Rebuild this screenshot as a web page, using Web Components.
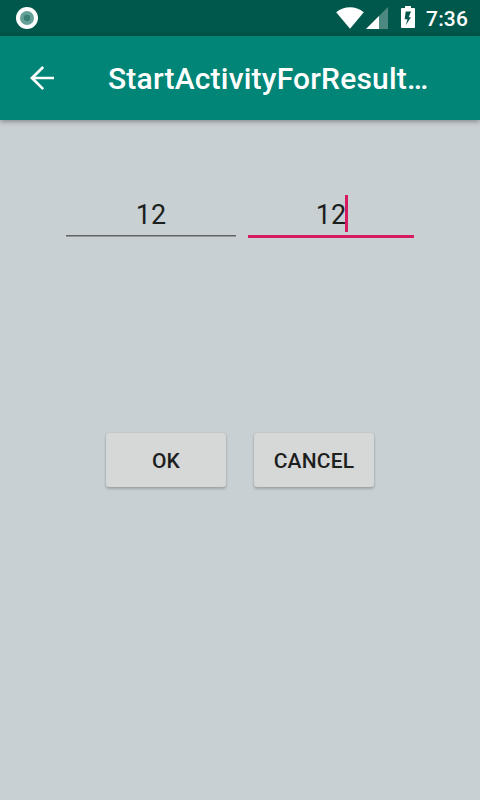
<!DOCTYPE html>
<html lang="en">
<head>
<meta charset="utf-8">
<title>StartActivityForResult</title>
<style>
html, body { margin: 0; height: 100%; }
body { font-family: Roboto, "Noto Sans", sans-serif; overflow: hidden; }
</style>
</head>
<body>
<phone-screen>
  <status-bar slot="status">7:36</status-bar>
  <app-bar slot="bar">StartActivityForResult…</app-bar>
  <number-field slot="fields" style="width:170px">12</number-field>
  <number-field slot="fields" style="width:166px" focused>12</number-field>
  <raised-button slot="actions">OK</raised-button>
  <raised-button slot="actions">CANCEL</raised-button>
</phone-screen>
<script>
function define(name, html) {
  const template = document.createElement('template');
  template.innerHTML = html;
  customElements.define(name, class extends HTMLElement {
    constructor() {
      super();
      this.attachShadow({ mode: 'open' }).append(template.content.cloneNode(true));
    }
  });
}

define('phone-screen', `
<style>
:host { display: flex; flex-direction: column; width: 480px; height: 800px; background: #c8d0d4; color: #1d1e1e; }
.fields { display: flex; justify-content: center; gap: 12px; padding-top: 67px; height: 51px; }
.actions { display: flex; justify-content: center; gap: 28px; padding-top: 195px; }
</style>
<slot name="status"></slot>
<slot name="bar"></slot>
<div class="fields"><slot name="fields"></slot></div>
<div class="actions"><slot name="actions"></slot></div>`);

define('status-bar', `
<style>
:host { display: flex; align-items: center; box-sizing: border-box; height: 36px; padding: 0 12px 0 16px; background: #00574b; color: #fff; font-size: 21px; font-weight: 500; line-height: 36px; }
svg { display: block; flex: none; }
.space { flex: 1; }
.time { width: 42px; height: 36px; margin-left: 2px; line-height: 38px; letter-spacing: .2px; white-space: nowrap; }
</style>
<svg width="22" height="22" viewBox="0 0 22 22"><circle cx="11" cy="11" r="11" fill="#fff"/><circle cx="11" cy="11" r="7" fill="#66a198"/><circle cx="11" cy="11" r="3.2" fill="#3b8075"/></svg>
<span class="space"></span>
<svg width="88" height="36" viewBox="336 0 88 36" fill="#fff">
  <path d="M336.2 12.2C344.3 5.7 355.7 5.7 363.8 12.2L350 28.7Z"/>
  <path d="M388 7V29H366Z" fill-opacity=".3"/>
  <path d="M379 16V29H366Z"/>
  <path fill-rule="evenodd" d="M405 6h6v2h3q1 0 1 1v18q0 1-1 1h-12q-1 0-1-1V9q0-1 1-1h3ZM405.7 11.5H411L408.7 17.3H411L405.7 25.3L407.5 19.3H404.7Z"/>
</svg>
<span class="time"><slot></slot></span>`);

define('app-bar', `
<style>
:host { display: flex; align-items: center; box-sizing: border-box; height: 84px; padding: 0 24px; gap: 48px; background: #008577; color: #fff; font-size: 30px; font-weight: 500; line-height: 36px; letter-spacing: .2px; white-space: nowrap; box-shadow: 0 1px 5px rgba(0,0,0,.34), 0 3px 6px rgba(0,0,0,.06); }
svg { display: block; flex: none; }
.title { padding-top: 1px; }
</style>
<svg width="36" height="36" viewBox="0 0 24 24" fill="#fff"><path d="M20 11.2H7.5l5.9-5.9L12.2 4l-8.2 8 8.2 8 1.2-1.2L7.5 12.9H20z"/></svg>
<span class="title"><slot></slot></span>`);

define('number-field', `
<style>
:host { display: flex; flex-direction: column; height: 51px; font-size: 27px; line-height: 32px; text-align: center; }
.text { height: 48px; padding-top: 12px; box-sizing: border-box; position: relative; }
.caret { display: none; position: absolute; top: 8px; left: 97px; width: 3px; height: 37px; background: #d81b60; }
.line { height: 2px; background: linear-gradient(#606465 50%, #929799 50%); }
:host([focused]) .caret { display: block; }
:host([focused]) .line { height: 3px; background: #d81b60; }
</style>
<div class="text"><slot></slot><span class="caret"></span></div>
<div class="line"></div>`);

define('raised-button', `
<style>
:host { display: flex; align-items: center; justify-content: center; width: 120px; height: 54px; border-radius: 3px; background: #d6d7d7; font-size: 21px; font-weight: 500; line-height: 24px; letter-spacing: .18px; box-shadow: 0 2px 3px rgba(0,0,0,.2), 0 0 2px rgba(0,0,0,.12); }
span { padding-top: 2px; }
</style>
<span><slot></slot></span>`);
</script>
</body>
</html>
